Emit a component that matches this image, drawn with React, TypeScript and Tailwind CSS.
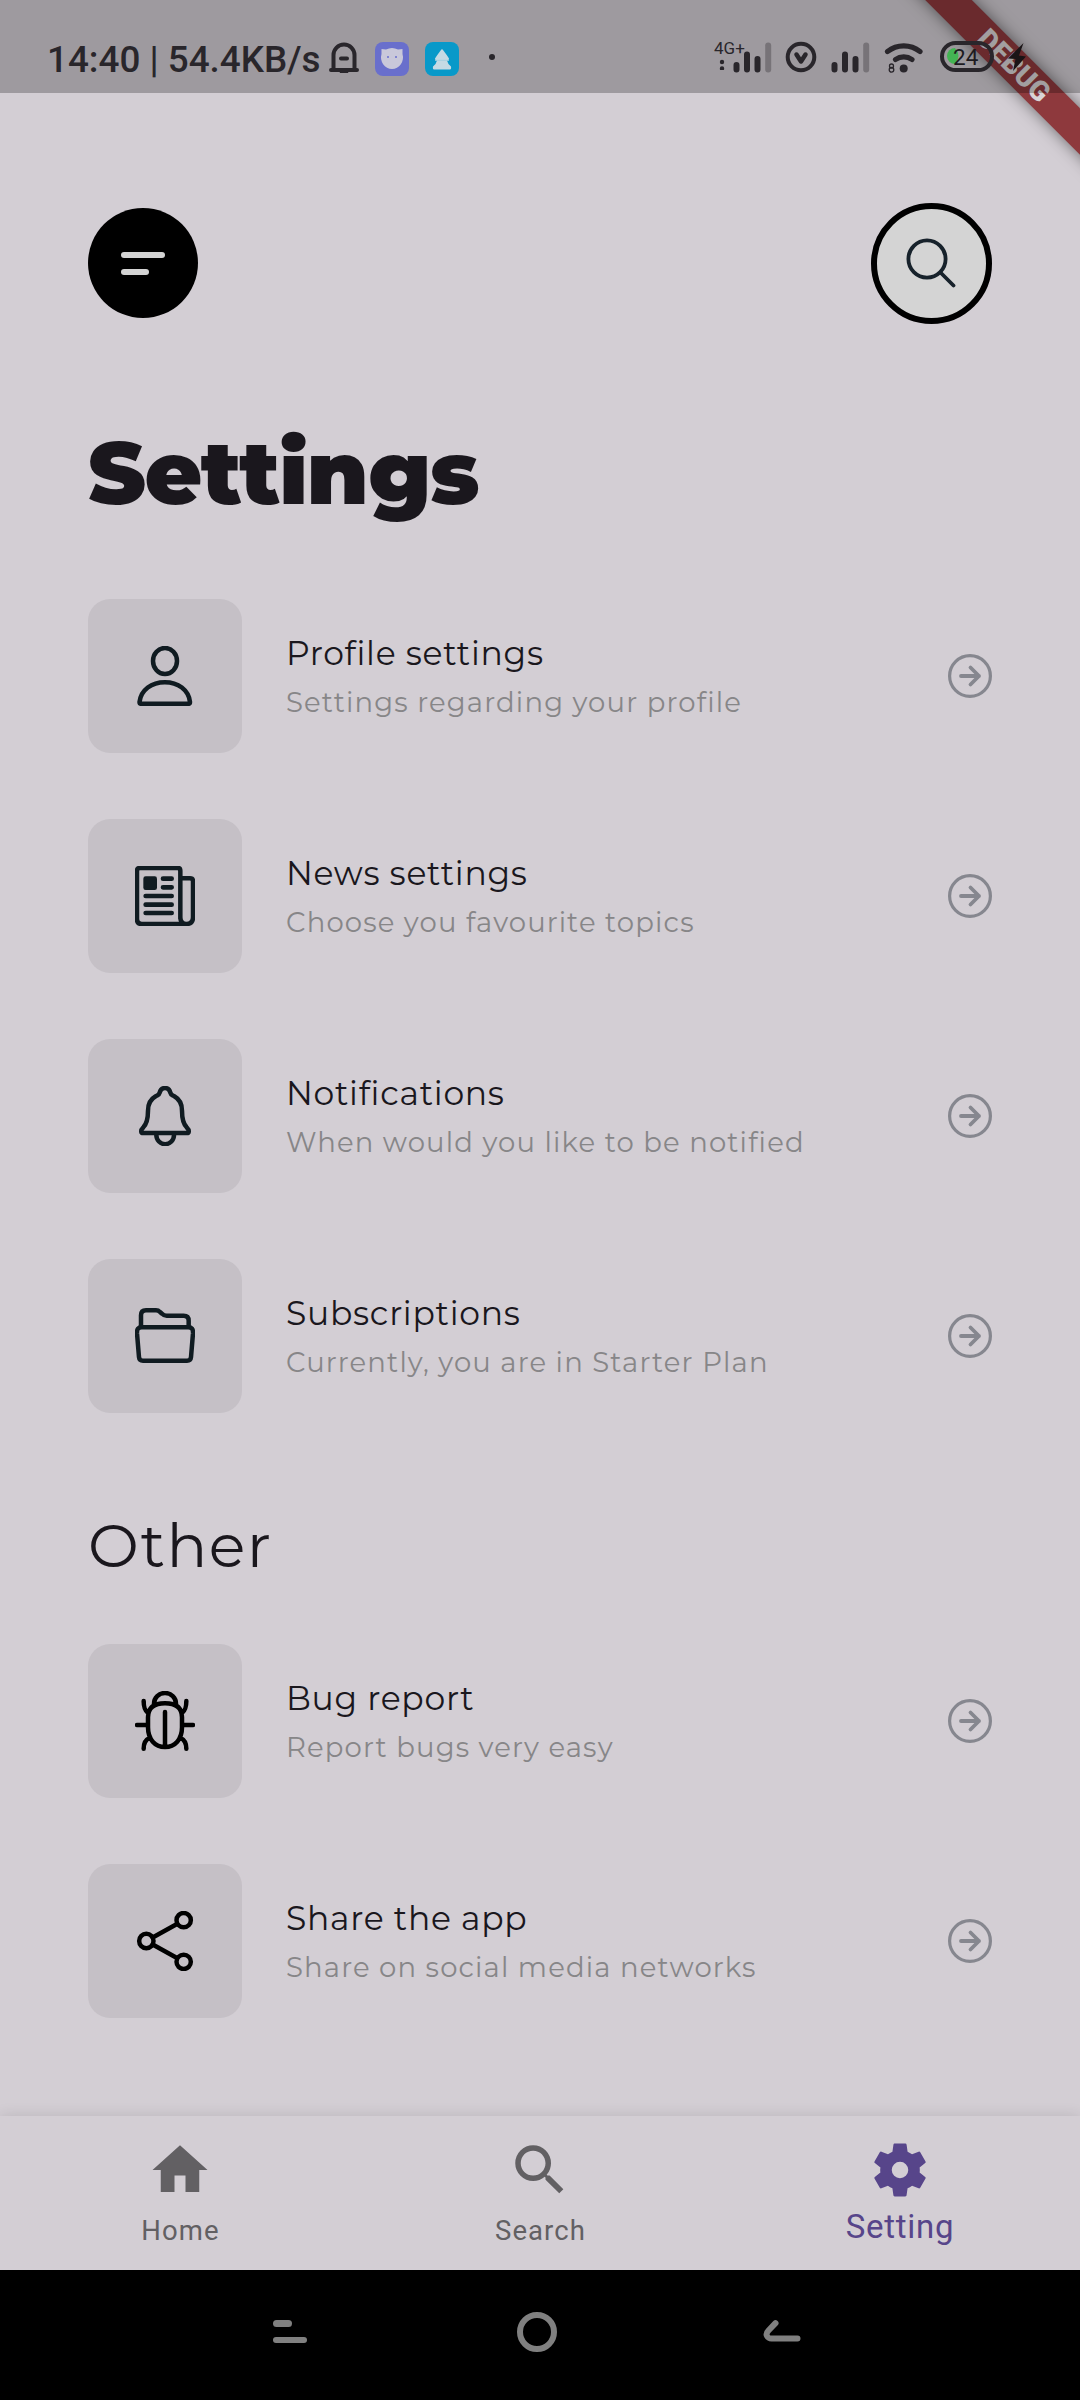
import React, { type ReactNode } from "react";

type IconProps = { children: ReactNode; color?: string };

function TileIcon({ children, color = "#101b21" }: IconProps) {
  return (
    <svg className="h-[60px] w-[60px]" viewBox="0 0 180 180" fill="none" stroke={color} strokeWidth="13.5" strokeLinecap="round" strokeLinejoin="round">
      {children}
    </svg>
  );
}

const ProfileIcon = () => (
  <TileIcon>
    <ellipse cx="90" cy="45" rx="36" ry="39" />
    <path d="M13.500 168C18 132 50 108.500 89.500 108.500S161 132 165 168q0 5.500-5 5.500H18.500q-5 0-5-5.500z" />
  </TileIcon>
);

const NewsIcon = () => (
  <TileIcon>
    <path d="M136 158V14q0-8-8-8H14q-8 0-8 8v146q0 14 14 14h134q20 0 20-20V46q0-9-9-9h-29M136 154c0 12 6 20 18 20" />
    <rect x="25" y="31" width="41" height="41" rx="7" fill="#101b21" stroke="none" />
    <path strokeWidth="14" d="M84 38h26M84 64h26M32 90h78M32 116h78M32 141h78" />
  </TileIcon>
);

const BellIcon = () => (
  <TileIcon>
    <path d="M90 6c-9 0-14 6-16 14-2 8-6 7-12 11C46 40 39 52 39 74c0 26-3 38-14 50-9 9-8 17 0 17h130c8 0 9-8 0-17-11-12-14-24-14-50 0-22-7-34-23-43-6-4-10-3-12-11-2-8-7-14-16-14z" />
    <path d="M64 143v4a26 27 0 0 0 53 0v-4" />
  </TileIcon>
);

const FolderIcon = () => (
  <TileIcon>
    <path d="M18 60V28q0-15 15-15h30q7 0 12 5l6 5q5 6 14 6h51q15 0 15 15v16" />
    <path d="M20 63.500h140q15 0 14 18l-6 72q-1 11-12 11H24q-11 0-12-11L6 81.500q-1-18 14-18z" />
  </TileIcon>
);

const BugIcon = () => (
  <TileIcon color="#000">
    <path d="M57 40v-2a33 32 0 0 1 66 0v2" />
    <path d="M90 37c24 0 51 6 51 42v30c0 36-21 59-51 59s-51-23-51-59V79c0-36 27-42 51-42zM90 63v104M6 102h30M144 102h30M26 30c0 20 3 28 13 36M154 30c0 20-3 28-13 36M26 173c0-18 6-27 17-32M154 173c0-18-6-27-17-32" />
  </TileIcon>
);

const ShareIcon = () => (
  <TileIcon color="#000">
    <circle cx="34" cy="90" r="21.500" />
    <circle cx="146" cy="27.500" r="21.500" />
    <circle cx="146" cy="152.500" r="21.500" />
    <path d="M53 79.500 126 39M53 100.500 126 141" />
  </TileIcon>
);

const ArrowIcon = () => (
  <svg className="h-11 w-11" viewBox="0 0 44 44" fill="none" stroke="#86878f" strokeWidth="3.200" strokeLinecap="round" strokeLinejoin="round">
    <circle cx="22" cy="22" r="20.400" />
    <path strokeWidth="3.800" d="M13 22h18M22.500 13.500 31 22l-8.500 8.500" />
  </svg>
);

type Item = { icon: ReactNode; title: string; note: string };

const mainItems: Item[] = [
  { icon: <ProfileIcon />, title: "Profile settings", note: "Settings regarding your profile" },
  { icon: <NewsIcon />, title: "News settings", note: "Choose you favourite topics" },
  { icon: <BellIcon />, title: "Notifications", note: "When would you like to be notified" },
  { icon: <FolderIcon />, title: "Subscriptions", note: "Currently, you are in Starter Plan" },
];

const otherItems: Item[] = [
  { icon: <BugIcon />, title: "Bug report", note: "Report bugs very easy" },
  { icon: <ShareIcon />, title: "Share the app", note: "Share on social media networks" },
];

function Row({ icon, title, note }: Item) {
  return (
    <li className="flex h-[154px] items-center">
      <div className="flex h-[154px] w-[154px] items-center justify-center rounded-[22px] bg-[#c5c0c6]">{icon}</div>
      <div className="ml-11 flex-1 pt-1 whitespace-nowrap">
        <div className="text-[33px] leading-[49px] tracking-[0.72px] text-[#1a171d]">{title}</div>
        <div className="text-[27.5px] leading-[49px] tracking-[1.15px] text-[#878688]">{note}</div>
      </div>
      <ArrowIcon />
    </li>
  );
}

function SignalBars() {
  return (
    <svg className="h-8 w-[39px]" viewBox="0 0 39 32" stroke="#29262b" strokeWidth="6" strokeLinecap="round">
      <path d="M3.500 24v4.500M14 13.500v15M24.500 18v10.500" />
      <path stroke="#777378" d="M35.200 4.500v24" />
    </svg>
  );
}

function StatusBar() {
  return (
    <header className="absolute inset-x-0 top-0 z-20 flex h-[93px] bg-black/25 pt-[41px] pl-[47px] text-[#29262b]">
      <span className="-mt-[3px] w-[276px] text-[36.8px] leading-[43px] font-medium whitespace-nowrap">14:40 | 54.4KB/s</span>
      <svg className="ml-[5px] h-8 w-8" viewBox="0 0 32 32" fill="none" stroke="currentColor" strokeWidth="4" strokeLinecap="round">
        <path d="M3 29h26M5.500 28V14a10.500 10.500 0 0 1 21 0v14M13 17.500h6" />
        <path stroke="none" fill="currentColor" d="M11.500 30a4.500 4.500 0 0 0 9 0z" />
      </svg>
      <svg className="mt-[.5px] ml-[15px] h-[34px] w-[34px]" viewBox="0 0 34 34">
        <rect width="34" height="34" rx="8" fill="#696fcc" />
        <path fill="#c9c8da" d="M6.500 7 11 7.500q6-3 12 0l4.500-.5v5a11 11.500 0 1 1-21 0z" />
        <circle cx="13" cy="15" r="1" fill="#696fcc" />
        <circle cx="21" cy="15" r="1" fill="#696fcc" />
      </svg>
      <svg className="mt-[.5px] ml-4 h-[34px] w-[34px]" viewBox="0 0 34 34">
        <rect width="34" height="34" rx="8" fill="#0899c9" />
        <path fill="#c5dae4" d="M17 7q1.500 1 7 9.500.500 1.500-2 2 .500 3 4 6 .500 3-1 3H9q-1.500 0-1-3 3.500-3 4-6-2.500-.500-2-2Q15.500 8 17 7z" />
        <path stroke="#a5cfdf" d="M10 18.300h14" />
      </svg>
      <div className="mt-[13px] ml-[30px] h-[6px] w-[6px] rounded-full bg-current" />
      <div className="-mt-[3px] ml-[219px] flex h-[34px] w-[20px] flex-col">
        <span className="text-[17px] leading-[20px] whitespace-nowrap">4G+</span>
        <svg className="ml-[5px] h-3 w-[6px]" viewBox="0 0 6 12" fill="currentColor">
          <circle cx="3" cy="4" r="2.200" />
          <circle cx="3" cy="10.500" r="2.200" />
        </svg>
      </div>
      <div className="-ml-[1px]"><SignalBars /></div>
      <svg className="ml-[13px] h-8 w-8" viewBox="0 0 32 32" fill="none" stroke="currentColor" strokeLinecap="round" strokeLinejoin="round">
        <circle cx="16" cy="16" r="13.300" strokeWidth="4" />
        <path strokeWidth="4.500" d="M11.500 13.500 16 20.500l4.500-7" />
      </svg>
      <div className="ml-[13.5px]"><SignalBars /></div>
      <svg className="ml-[14px] h-8 w-10" viewBox="0 0 40 32" fill="none" stroke="currentColor" strokeWidth="5.200" strokeLinecap="round">
        <path d="M3.500 10.500a26 26 0 0 1 32.500 0M11.500 18.500a14 14 0 0 1 16.500 0" />
        <circle cx="19.700" cy="27.500" r="4" fill="currentColor" stroke="none" />
        <circle cx="7.500" cy="25" r="2" strokeWidth="1.300" />
        <circle cx="7.500" cy="28.800" r="2.300" strokeWidth="1.300" />
      </svg>
      <div className="relative ml-[16.5px] flex h-[31px] w-[54px] items-center rounded-full border-4 border-current">
        <svg className="absolute top-[3px] left-[3px] h-4 w-3" viewBox="0 0 12 16">
          <path fill="#43b453" d="M8 0a8 8 0 0 0 0 16q3-3.500 3.500-8Q11 3 8 0z" />
        </svg>
        <span className="relative ml-[9px] text-[22.5px] leading-[22px] text-[#1d1b1f]">24</span>
      </div>
      <svg className="mt-[2px] ml-[13px] h-[28px] w-[20px]" viewBox="0 0 20 28">
        <path fill="#1a1416" d="M16.500 0 1 15.500l7.500.500L6 28 19 13.500l-7-1z" />
      </svg>
    </header>
  );
}

function DebugBanner() {
  return (
    <div className="absolute top-0 right-0 z-10 h-[200px] w-[200px] overflow-hidden">
      <div className="absolute top-[49px] -left-[16px] flex h-[33px] w-[300px] rotate-45 items-center justify-center bg-[#8e393d] text-[28px] leading-[33px] font-black text-[#d9d4d6] shadow-[0_0_16px_rgba(0,0,0,0.5)]">
        DEBUG
      </div>
    </div>
  );
}

export default function App() {
  return (
    <div className="relative flex h-[2400px] w-[1080px] flex-col overflow-hidden bg-[#d3ced4] font-['Roboto',sans-serif]">
      <StatusBar />
      <DebugBanner />
      <main className="flex h-[2116px] flex-col px-[88px] pt-[203px] font-['Montserrat','Inter',sans-serif]">
        <div className="flex h-[121px] items-center justify-between">
          <button className="mb-px flex h-[110px] w-[110px] flex-col items-start justify-center gap-[11px] rounded-full bg-black pl-[33px]">
            <span className="h-[6px] w-11 rounded-full bg-[#d4d4d4]" />
            <span className="h-[6px] w-[27.5px] rounded-full bg-[#d4d4d4]" />
          </button>
          <button className="flex h-[121px] w-[121px] items-center justify-center rounded-full border-[6px] border-black bg-[#d4d4d4]">
            <svg className="mr-px mb-px h-[50px] w-[50px]" viewBox="0 0 50 50" fill="none" stroke="#17222b" strokeWidth="3.800" strokeLinecap="round">
              <circle cx="21" cy="21" r="18.600" />
              <path d="m34.500 34.500 13 13" />
            </svg>
          </button>
        </div>
        <h1 className="mt-[95px] text-[88px] leading-[108px] font-black tracking-[-1.05px] text-[#1a171d]">Settings</h1>
        <ul className="mt-[72px] flex flex-col gap-[66px]">
          {mainItems.map((item) => <Row key={item.title} {...item} />)}
        </ul>
        <h2 className="mt-[95px] text-[60.5px] leading-[74px] tracking-[1.4px] text-[#1a171d]">Other</h2>
        <ul className="mt-[62px] flex flex-col gap-[66px]">
          {otherItems.map((item) => <Row key={item.title} {...item} />)}
        </ul>
      </main>
      <nav className="grid h-[154px] grid-cols-3 shadow-[0_0_14px_rgba(0,0,0,0.12)]">
        <div className="flex flex-col items-center pt-[21px] text-[#626063]">
          <svg className="h-[66px] w-[66px]" viewBox="0 0 24 24" fill="currentColor"><path d="M10 20v-6h4v6h5v-8h3L12 3 2 12h3v8z" /></svg>
          <span className="mt-3 pl-px text-[27.5px] leading-8 tracking-[1.1px]">Home</span>
        </div>
        <div className="flex flex-col items-center pt-[21px] text-[#626063]">
          <svg className="h-[66px] w-[66px]" viewBox="0 0 24 24" fill="currentColor"><path d="M15.500 14h-.79l-.28-.27A6.471 6.471 0 0 0 16 9.500 6.500 6.500 0 1 0 9.500 16c1.610 0 3.090-.590 4.230-1.570l.27.28v.79l5 4.990L20.490 19l-4.990-5zm-6 0C7.010 14 5 11.990 5 9.500S7.010 5 9.500 5 14 7.010 14 9.500 11.990 14 9.500 14z" /></svg>
          <span className="mt-3 pl-px text-[27.5px] leading-8 tracking-[1.1px]">Search</span>
        </div>
        <div className="flex flex-col items-center pt-[21px] text-[#57458a]">
          <svg className="h-[66px] w-[66px]" viewBox="0 0 24 24" fill="currentColor"><path d="M19.140 12.940c.040-.300.060-.610.060-.940 0-.320-.020-.640-.070-.940l2.030-1.580a.490.490 0 0 0 .120-.610l-1.920-3.320a.488.488 0 0 0-.590-.220l-2.390.960c-.500-.380-1.030-.700-1.620-.940l-.360-2.540a.484.484 0 0 0-.480-.410h-3.840c-.240 0-.430.170-.470.410l-.360 2.540c-.590.240-1.130.570-1.620.940l-2.390-.960c-.220-.080-.470 0-.590.220L2.740 8.870c-.120.210-.080.470.120.610l2.030 1.580c-.050.300-.090.630-.090.940s.020.640.070.940l-2.030 1.580a.490.490 0 0 0-.120.610l1.920 3.320c.120.220.370.290.590.220l2.390-.960c.500.380 1.030.700 1.620.940l.360 2.540c.050.240.240.410.480.410h3.840c.240 0 .440-.170.470-.410l.360-2.540c.590-.240 1.130-.560 1.620-.940l2.390.960c.220.080.470 0 .590-.220l1.920-3.320c.120-.220.070-.470-.120-.610l-2.010-1.580zM12 15a3 3 0 1 1 0-6 3 3 0 0 1 0 6z" /></svg>
          <span className="mt-1 text-[33px] leading-[39px] tracking-[0.7px]">Setting</span>
        </div>
      </nav>
      <footer className="flex h-[130px] items-start bg-black pt-[42px] pl-[273px]">
        <div className="mt-2 flex w-[34px] flex-col items-start gap-[10px]">
          <span className="h-[6.5px] w-[19px] rounded-full bg-[#808080]" />
          <span className="h-[6.5px] w-[34px] rounded-full bg-[#808080]" />
        </div>
        <span className="ml-[210px] h-10 w-10 rounded-full border-[6px] border-[#808080]" />
        <svg className="ml-[206px] mt-[7px] h-6 w-[38px]" viewBox="0 0 38 24" fill="none" stroke="#808080" strokeWidth="6" strokeLinecap="round" strokeLinejoin="round">
          <path d="M12.500 4.200 5.500 11.500c-4 4-1 8 3 8h26" />
        </svg>
      </footer>
    </div>
  );
}
